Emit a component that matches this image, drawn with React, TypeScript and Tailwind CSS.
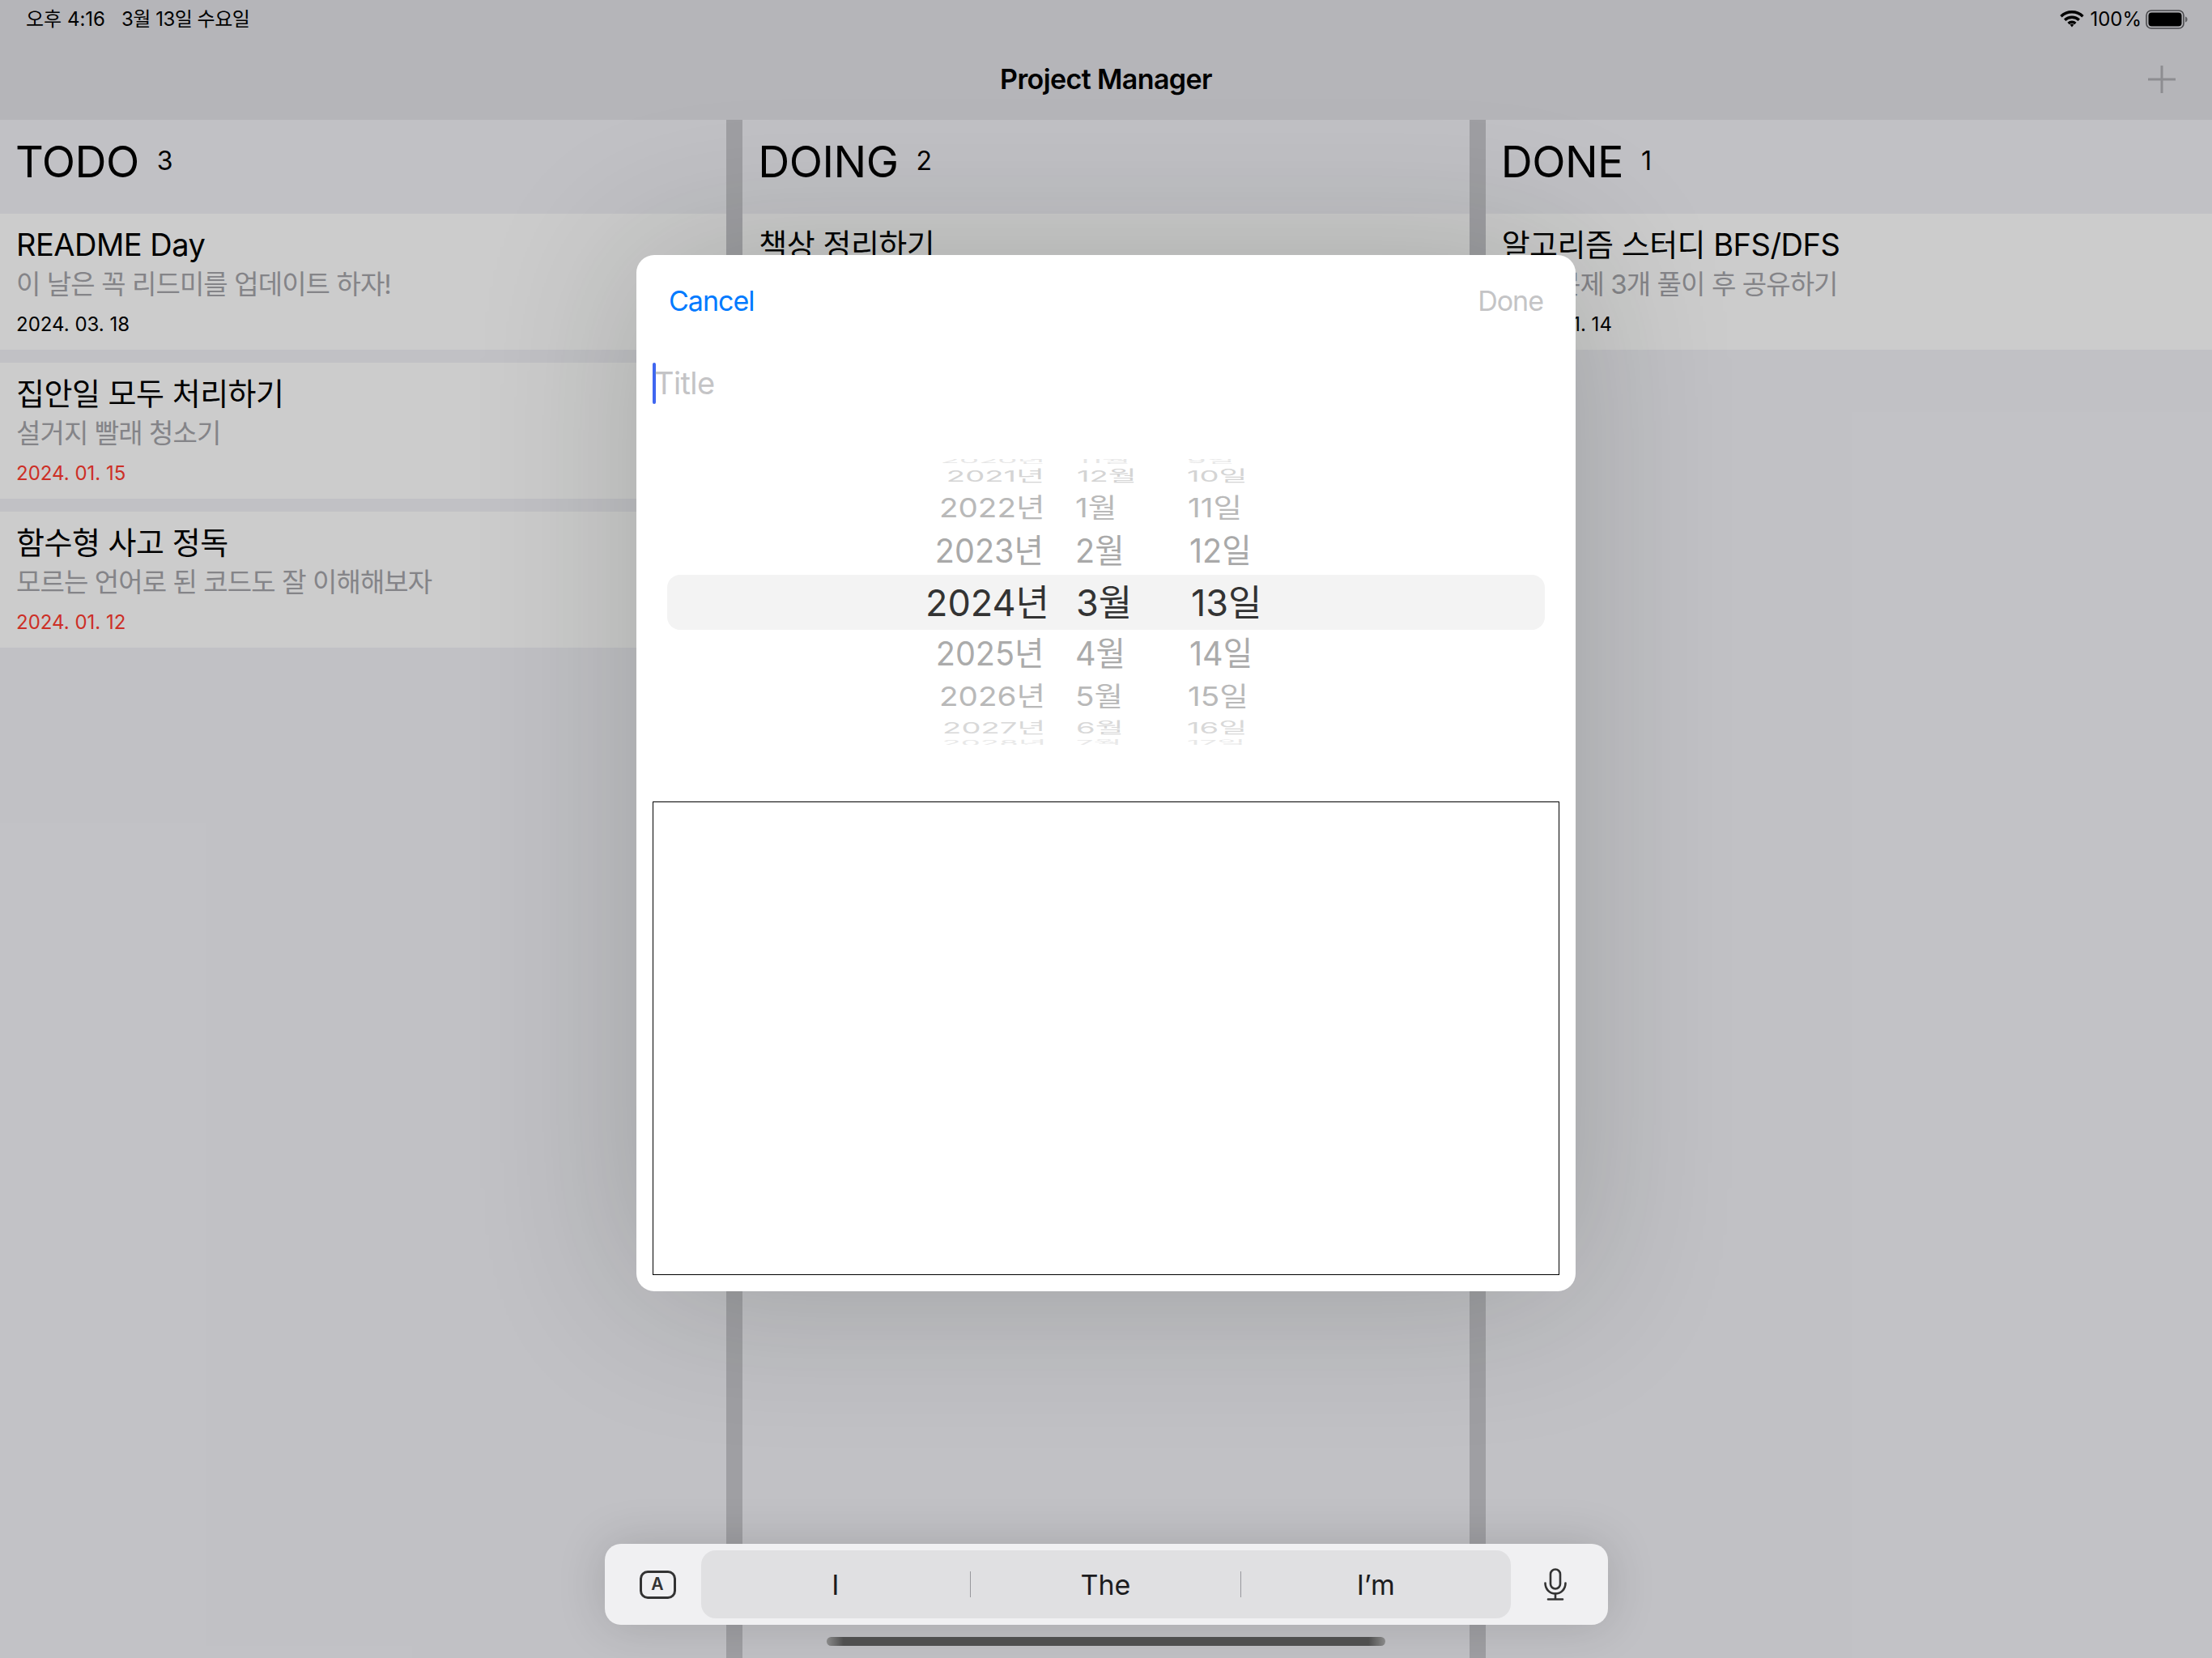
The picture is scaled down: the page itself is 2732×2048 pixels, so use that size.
import React from 'react';

interface Task {
  title: string;
  body?: string;
  date?: string;
  overdue?: boolean;
}

interface Column {
  name: string;
  count: number;
  tasks: Task[];
}

const columns: Column[] = [
  {
    name: 'TODO',
    count: 3,
    tasks: [
      { title: 'README Day', body: '이 날은 꼭 리드미를 업데이트 하자!', date: '2024. 03. 18' },
      { title: '집안일 모두 처리하기', body: '설거지 빨래 청소기', date: '2024. 01. 15', overdue: true },
      { title: '함수형 사고 정독', body: '모르는 언어로 된 코드도 잘 이해해보자', date: '2024. 01. 12', overdue: true },
    ],
  },
  { name: 'DOING', count: 2, tasks: [{ title: '책상 정리하기' }] },
  {
    name: 'DONE',
    count: 1,
    tasks: [{ title: '알고리즘 스터디 BFS/DFS', body: '백준 문제 3개 풀이 후 공유하기', date: '2024. 01. 14' }],
  },
];

// wheel rows, top to bottom: the classes squash each row like the drum of a picker
const wheelRows = [
  { year: '2020년', month: '11월', day: '9일', row: 'h-[18px] -mt-[7px]', text: 'text-[#e6e6e6] scale-x-[0.83] scale-y-[0.2]', yearBox: 'pr-[5px]', monthBox: 'pl-[2px]', dayBox: 'pl-[0px]' },
  { year: '2021년', month: '12월', day: '10일', row: 'h-[20px]', text: 'text-[#d4d4d4] scale-x-[0.83] scale-y-[0.42]', yearBox: 'pr-[6px]', monthBox: 'pl-[2px]', dayBox: 'pl-[0px]' },
  { year: '2022년', month: '1월', day: '11일', row: 'h-[58px]', text: 'text-[#b9b9b9] scale-x-[0.84] scale-y-[0.72]', yearBox: 'pr-[5px]', monthBox: 'pl-[0px]', dayBox: 'pl-[1px]' },
  { year: '2023년', month: '2월', day: '12일', row: 'h-[48px]', text: 'text-[#a9a9a9] scale-x-[0.86] scale-y-[0.88]', yearBox: 'pr-[7px]', monthBox: 'pl-[0px]', dayBox: 'pl-[3px]' },
  { year: '2025년', month: '4월', day: '14일', row: 'h-[46px]', text: 'text-[#ababab] scale-x-[0.86] scale-y-[0.88]', yearBox: 'pr-[7px]', monthBox: 'pl-[0px]', dayBox: 'pl-[3px]' },
  { year: '2026년', month: '5월', day: '15일', row: 'h-[60px]', text: 'text-[#b9b9b9] scale-x-[0.84] scale-y-[0.72]', yearBox: 'pr-[5px]', monthBox: 'pl-[0px]', dayBox: 'pl-[1px]' },
  { year: '2027년', month: '6월', day: '16일', row: 'h-[18px]', text: 'text-[#d8d8d8] scale-x-[0.83] scale-y-[0.42]', yearBox: 'pr-[5px]', monthBox: 'pl-[1px]', dayBox: 'pl-[0px]' },
  { year: '2028년', month: '7월', day: '17일', row: 'h-[20px]', text: 'text-[#e8e8e8] scale-x-[0.83] scale-y-[0.2]', yearBox: 'pr-[3px]', monthBox: 'pl-[1px]', dayBox: 'pl-[0px]' },
];

const WheelRow = ({ r }: { r: (typeof wheelRows)[number] }) => (
  <div className={`flex items-center ${r.row}`}>
    <div className={`w-[472px] shrink-0 flex justify-end ${r.yearBox}`}>
      <span className={`text-[46px] leading-none whitespace-nowrap origin-right ${r.text}`}>{r.year}</span>
    </div>
    <div className={`ml-[32px] w-[138px] shrink-0 flex ${r.monthBox}`}>
      <span className={`text-[46px] leading-none whitespace-nowrap origin-left ${r.text}`}>{r.month}</span>
    </div>
    <div className={`flex ${r.dayBox}`}>
      <span className={`text-[46px] leading-none whitespace-nowrap origin-left ${r.text}`}>{r.day}</span>
    </div>
  </div>
);

const TaskCard = ({ task }: { task: Task }) => (
  <div className="h-[168px] bg-white pl-[20px] pt-[13px] flex flex-col">
    <div className="text-[38px] leading-[50px] tracking-[-0.5px] text-black whitespace-nowrap">{task.title}</div>
    {task.body && <div className="text-[33px] leading-[48px] tracking-[-0.9px] text-[#a6a6ab] whitespace-nowrap">{task.body}</div>}
    {task.date && (
      <div className={`mt-[9px] text-[24px] leading-[34px] whitespace-nowrap ${task.overdue ? 'text-[#ff3b30]' : 'text-black'}`}>
        {task.date}
      </div>
    )}
  </div>
);

const WifiIcon = () => (
  <svg width="30" height="21" viewBox="0 0 30 21" fill="none" stroke="#000" strokeWidth="3.4">
    <path d="M1.5 7.2a19.5 19.5 0 0 1 27 0" />
    <path d="M6.2 11.8a12.8 12.8 0 0 1 17.6 0" />
    <path d="M10.6 16a6.4 6.4 0 0 1 8.8 0" />
    <path d="M12.6 17.6a3.6 3.6 0 0 1 4.8 0L15 20.6z" fill="#000" stroke="none" />
  </svg>
);

const BatteryIcon = () => (
  <svg width="52" height="24" viewBox="0 0 52 24" fill="none">
    <rect x="1" y="1" width="46" height="22" rx="6" stroke="#5c5c60" strokeWidth="1.6" />
    <rect x="3.5" y="3.5" width="41" height="17" rx="4" fill="#000" />
    <path d="M49 8.5c1.6.5 2.6 1.800 2.600 3.500s-1 3-2.600 3.500z" fill="#77777b" />
  </svg>
);

const MicIcon = () => (
  <svg width="28" height="40" viewBox="0 0 28 40" fill="none" stroke="#333" strokeWidth="2.6" strokeLinecap="round">
    <rect x="8" y="1.500" width="12" height="24" rx="6" />
    <path d="M1.500 18.500c0 7.500 5.500 13 12.500 13s12.500-5.500 12.500-13" />
    <path d="M14 31.500v7M5 38.500h18" />
  </svg>
);

export default function App() {
  return (
    <div className="relative w-[2732px] h-[2048px] overflow-hidden flex flex-col bg-[#c7c7cc] font-['Inter','Noto_Sans_CJK_KR',sans-serif]">
      <div className="h-[148px] shrink-0 bg-[#e3e3e8] flex flex-col">
        <div className="h-[47px] shrink-0 pl-[32px] pr-[30px] flex items-center justify-between text-[24px] text-black">
          <div className="flex gap-[20px]">
            <span>오후 4:16</span>
            <span className="tracking-[-0.5px]">3월 13일 수요일</span>
          </div>
          <div className="flex items-center">
            <WifiIcon />
            <span className="ml-[7px]">100%</span>
            <span className="ml-[5px]">
              <BatteryIcon />
            </span>
          </div>
        </div>
        <div className="relative flex-1 flex items-center justify-center">
          <span className="text-[34px] font-semibold text-black tracking-[-0.6px]">Project Manager</span>
          <svg className="absolute right-[45px] top-[34px]" width="34" height="34" viewBox="0 0 34 34" stroke="#b1b1b6" strokeWidth="3">
            <path d="M17 0v34M0 17h34" />
          </svg>
        </div>
      </div>

      <div className="flex-1 grid grid-cols-3 gap-[20px]">
        {columns.map((col) => (
          <div key={col.name} className="bg-[#f2f2f7] flex flex-col">
            <div className="h-[116px] shrink-0 pl-[19px] pb-[14px] flex items-center">
              <span className="text-[54px] text-black tracking-[-0.5px]">{col.name}</span>
              <span className="ml-[22px] text-[32px] text-black">{col.count}</span>
            </div>
            <div className="flex flex-col gap-[16px]">
              {col.tasks.map((task) => (
                <TaskCard key={task.title} task={task} />
              ))}
            </div>
          </div>
        ))}
      </div>

      {/* dimmed layer with the sheet and keyboard bar on top */}
      <div className="absolute inset-0 bg-black/20 flex flex-col items-center pt-[315px]">
        <div className="w-[1160px] h-[1280px] shrink-0 rounded-[22px] bg-white px-[20px] pb-[20px] flex flex-col shadow-[0_0_200px_rgba(20,30,20,0.2)]">
          <div className="h-[112px] shrink-0 px-[20px] flex items-center justify-between text-[34px]">
            <span className="text-[#007aff] tracking-[-1px]">Cancel</span>
            <span className="text-[#c4c4c6] tracking-[-1px]">Done</span>
          </div>
          <div className="h-[92px] shrink-0 flex items-center">
            <span className="w-[4px] h-[51px] rounded-full bg-[#3f66f0]" />
            <span className="text-[38px] text-[#c4c4c6] tracking-[-0.6px] -ml-[2px]">Title</span>
          </div>
          <div className="mt-[48px] h-[353px] shrink-0 overflow-hidden text-[#333] mx-[18px]">
            {wheelRows.slice(0, 4).map((r) => (
              <WheelRow key={r.year} r={r} />
            ))}
            <div className="my-[6px] h-[68px] rounded-[16px] bg-[#f3f3f3] flex items-center text-[45px] leading-none text-[#333]">
              <span className="w-[472px] shrink-0 text-right">2024년</span>
              <span className="ml-[33px] w-[142px] shrink-0">3월</span>
              <span>13일</span>
            </div>
            {wheelRows.slice(4).map((r) => (
              <WheelRow key={r.year} r={r} />
            ))}
          </div>
          <div className="mt-[70px] flex-1 border border-black" />
        </div>

        <div className="mt-[312px] w-[1239px] h-[100px] shrink-0 rounded-[20px] bg-[#f0f0f2] flex items-center shadow-[0_0_60px_rgba(0,0,0,0.15)]">
          <div className="w-[119px] shrink-0 pl-[43px]">
            <div className="w-[45px] h-[35px] rounded-[10px] border-[3px] border-[#333] flex items-center justify-center text-[21px] font-semibold text-[#333]">
              A
            </div>
          </div>
          <div className="w-[1000px] h-[84px] shrink-0 rounded-[18px] bg-[#e0e0e2] flex items-center text-[34px] text-[#1c1c1e]">
            <span className="flex-1 text-center">I</span>
            <span className="w-px h-[32px] bg-[#98989c]" />
            <span className="flex-1 text-center">The</span>
            <span className="w-px h-[32px] bg-[#98989c]" />
            <span className="flex-1 text-center">I’m</span>
          </div>
          <div className="flex-1 flex justify-center pr-[9px]">
            <MicIcon />
          </div>
        </div>

        <div className="mt-[15px] w-[690px] h-[11px] shrink-0 rounded-full bg-[linear-gradient(90deg,#8a8a8a,#4f4f4f_3%,#4f4f4f_97%,#8a8a8a)]" />
      </div>
    </div>
  );
}
